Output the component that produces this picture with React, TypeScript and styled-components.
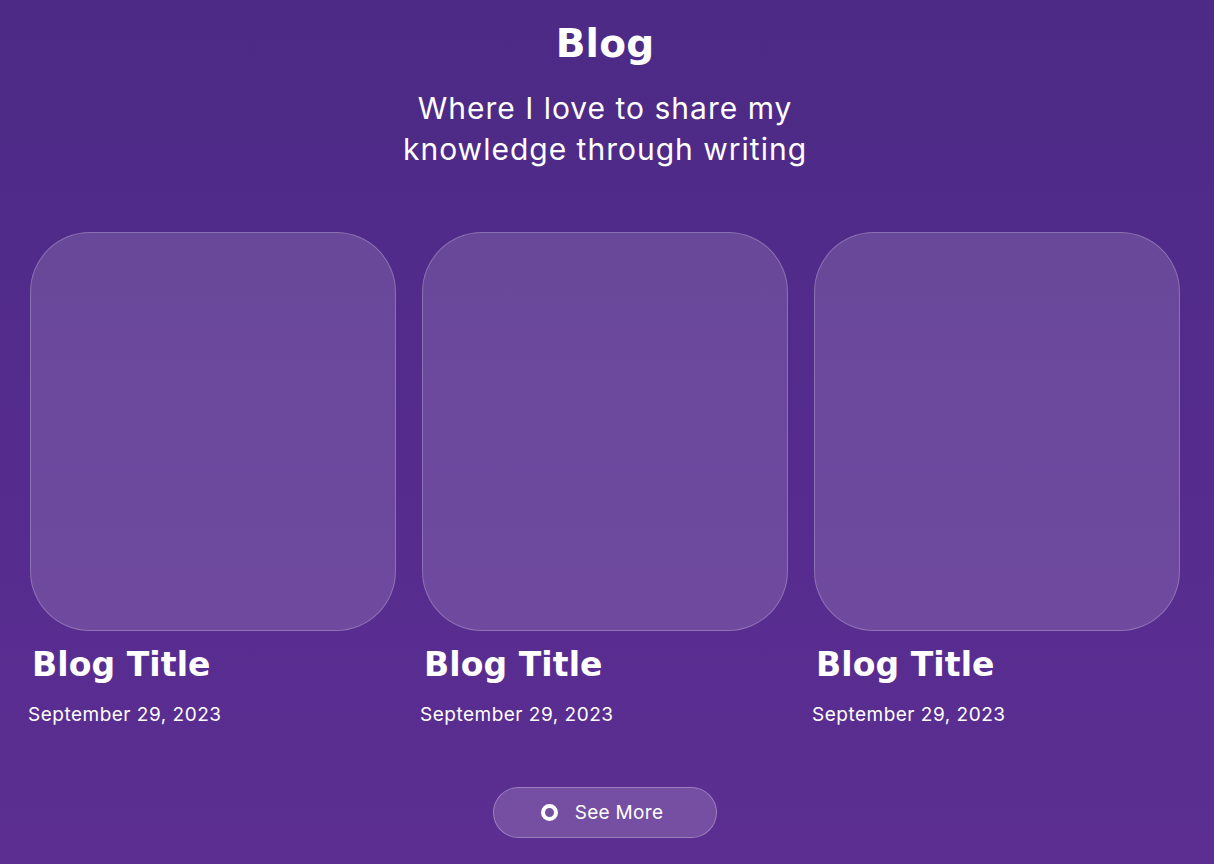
import React from "react";
import styled, { createGlobalStyle } from "styled-components";

const Global = createGlobalStyle`
  html, body { margin: 0; padding: 0; }
  body {
    min-height: 864px;
    background: linear-gradient(180deg, #4c2a85 0%, #562c8f 60%, #5c2e92 100%);
    font-family: "Inter", "Liberation Sans", sans-serif;
    color: #ffffff;
  }
`;

const Page = styled.main`
  box-sizing: border-box;
  min-height: 864px;
  padding: 16px 34px 0 30px;
  display: flex;
  flex-direction: column;
  align-items: center;
`;

const Heading = styled.h1`
  margin: 0;
  font-family: "DejaVu Sans", "Inter", sans-serif;
  font-size: 39px;
  font-weight: 700;
  line-height: 56px;
  letter-spacing: 0.2px;
`;

const Subtitle = styled.p`
  margin: 16px 0 0;
  font-size: 30px;
  font-weight: 400;
  line-height: 41px;
  text-align: center;
  max-width: 440px;
  letter-spacing: 1px;
`;

const Grid = styled.section`
  align-self: stretch;
  margin-top: 62px;
  display: grid;
  grid-template-columns: repeat(3, 1fr);
  gap: 26px;
`;

const Card = styled.article`
  display: flex;
  flex-direction: column;
`;

const Thumb = styled.div`
  height: 399px;
  border-radius: 60px;
  background: rgba(255, 255, 255, 0.14);
  border: 1px solid rgba(255, 255, 255, 0.22);
  box-sizing: border-box;
`;

const Title = styled.h2`
  margin: 12px 0 0 2px;
  font-family: "DejaVu Sans", "Inter", sans-serif;
  font-size: 33px;
  font-weight: 700;
  line-height: 44px;
  letter-spacing: 0.1px;
`;

const DateText = styled.p`
  margin: 16px 0 0 -2px;
  font-size: 19px;
  line-height: 24px;
  font-weight: 400;
  letter-spacing: 0.5px;
`;

const Button = styled.button`
  margin-top: 60px;
  width: 224px;
  height: 51px;
  border-radius: 26px;
  background: rgba(255, 255, 255, 0.16);
  border: 1px solid rgba(255, 255, 255, 0.28);
  color: #ffffff;
  font-family: inherit;
  font-size: 19px;
  letter-spacing: 0.3px;
  display: flex;
  align-items: center;
  justify-content: center;
  gap: 17px;
  padding: 0 6px 0 0;
  cursor: pointer;
`;

const Ring = styled.span`
  box-sizing: border-box;
  width: 17px;
  height: 17px;
  border-radius: 50%;
  border: 4px solid #ffffff;
`;

const posts = [1, 2, 3];

export default function App() {
  return (
    <>
      <Global />
      <Page>
        <Heading>Blog</Heading>
        <Subtitle>Where I love to share my knowledge through writing</Subtitle>
        <Grid>
          {posts.map((p) => (
            <Card key={p}>
              <Thumb />
              <Title>Blog Title</Title>
              <DateText>September 29, 2023</DateText>
            </Card>
          ))}
        </Grid>
        <Button>
          <Ring />
          See More
        </Button>
      </Page>
    </>
  );
}
